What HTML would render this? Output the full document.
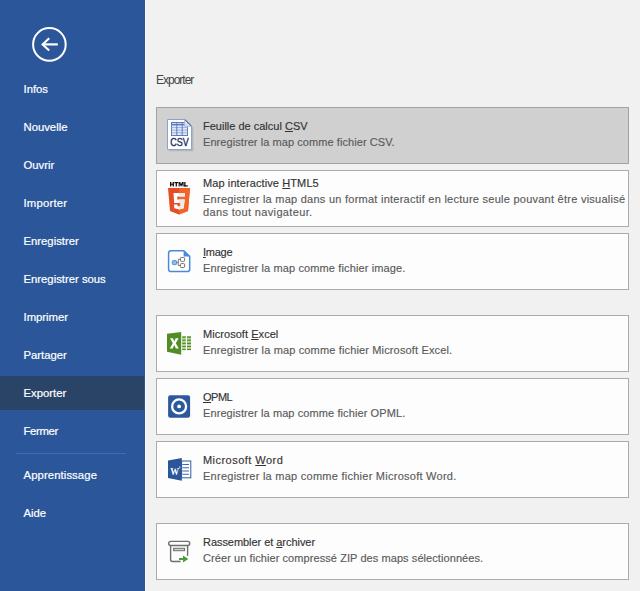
<!DOCTYPE html>
<html><head><meta charset="utf-8">
<style>
*{margin:0;padding:0;box-sizing:border-box}
html,body{width:640px;height:591px;overflow:hidden;background:#f1f1f1;font-family:"Liberation Sans",sans-serif}
#side{position:absolute;left:0;top:0;width:145px;height:591px;background:#2b579a}
#side .it{position:absolute;left:23.5px;color:#fff;font-size:11.3px;line-height:14px;white-space:nowrap;-webkit-text-stroke:0.2px #fff}
#sel{position:absolute;left:0;top:376px;width:144px;height:34px;background:#2a4468}
#sep{position:absolute;left:16px;top:453px;width:110px;height:1px;background:#3a6bc0}
#edge{position:absolute;left:145px;top:0;width:1px;height:591px;background:#fbf8f3}
.ttl{position:absolute;left:156px;top:73px;font-size:12px;letter-spacing:-1px;color:#444;line-height:14px;white-space:nowrap}
.card{position:absolute;left:156px;width:473px;height:57px;border:1px solid #ababab;background:#fdfdfd}
.card.on{background:#d0d0d0;border-color:#a2a2a2}
.t{position:absolute;left:46px;font-size:11px;line-height:13px;color:#333;white-space:nowrap;-webkit-text-stroke:0.15px #333}
.d{position:absolute;left:46px;font-size:11px;line-height:13px;color:#5a5a5a;white-space:nowrap;-webkit-text-stroke:0.15px #5a5a5a}
.ic{position:absolute;left:10px;top:10px}
u{text-decoration:underline;text-decoration-thickness:1px;text-underline-offset:1px;text-decoration-skip-ink:none}
</style></head><body>
<div id="side">
  <svg style="position:absolute;left:0;top:0" width="145" height="80">
    <circle cx="49.4" cy="44.4" r="16.3" fill="none" stroke="#fff" stroke-width="2"/>
    <path d="M42.5 44.4H57.8" stroke="#fff" stroke-width="2.2" fill="none"/>
    <path d="M49.2 38.2L42.6 44.4L49.2 50.6" stroke="#fff" stroke-width="2.1" fill="none"/>
  </svg>
  <div class="it" style="top:82px">Infos</div>
  <div class="it" style="top:120px">Nouvelle</div>
  <div class="it" style="top:158px">Ouvrir</div>
  <div class="it" style="top:196px;letter-spacing:0.2px">Importer</div>
  <div class="it" style="top:234px">Enregistrer</div>
  <div class="it" style="top:272px">Enregistrer sous</div>
  <div class="it" style="top:310px">Imprimer</div>
  <div class="it" style="top:348px">Partager</div>
  <div id="sel"></div>
  <div class="it" style="top:386px">Exporter</div>
  <div class="it" style="top:424px;letter-spacing:-0.35px">Fermer</div>
  <div id="sep"></div>
  <div class="it" style="top:468px;letter-spacing:0.1px">Apprentissage</div>
  <div class="it" style="top:506px">Aide</div>
</div>
<div id="edge"></div>
<div class="ttl">Exporter</div>

<div class="card on" style="top:107px">
  <div class="t" style="top:12px">Feuille de calcul <u>C</u>SV</div>
  <div class="d" style="top:28px;letter-spacing:0.07px">Enregistrer la map comme fichier CSV.</div>
</div>
<div class="card" style="top:170px">
  <div class="t" style="top:6px;letter-spacing:0.1px">Map interactive <u>H</u>TML5</div>
  <div class="d" style="top:22px;letter-spacing:0.253px">Enregistrer la map dans un format interactif en lecture seule pouvant être visualisé</div>
  <div class="d" style="top:35px;letter-spacing:0.35px">dans tout navigateur.</div>
</div>
<div class="card" style="top:233px">
  <div class="t" style="top:12px;letter-spacing:-0.25px"><u>I</u>mage</div>
  <div class="d" style="top:28px;letter-spacing:0.13px">Enregistrer la map comme fichier image.</div>
</div>
<div class="card" style="top:315px">
  <div class="t" style="top:12px;letter-spacing:0.05px">Microsoft <u>E</u>xcel</div>
  <div class="d" style="top:28px;letter-spacing:0.146px">Enregistrer la map comme fichier Microsoft Excel.</div>
</div>
<div class="card" style="top:378px">
  <div class="t" style="top:12px;letter-spacing:-0.5px"><u>O</u>PML</div>
  <div class="d" style="top:28px;letter-spacing:0.095px">Enregistrer la map comme fichier OPML.</div>
</div>
<div class="card" style="top:441px">
  <div class="t" style="top:12px;letter-spacing:0.46px">Microsoft <u>W</u>ord</div>
  <div class="d" style="top:28px;letter-spacing:0.255px">Enregistrer la map comme fichier Microsoft Word.</div>
</div>
<div class="card" style="top:523px">
  <div class="t" style="top:12px;letter-spacing:-0.05px">Rassembler et <u>a</u>rchiver</div>
  <div class="d" style="top:28px;letter-spacing:0.075px">Créer un fichier compressé ZIP des maps sélectionnées.</div>
</div>

<svg style="position:absolute;left:0;top:0" width="640" height="591" viewBox="0 0 640 591">
  <!-- CSV -->
  <g>
    <path d="M168.5 120.5H186L192.5 127V150.5H168.5Z" fill="#9aa0a8" opacity="0.55" transform="translate(0.8,0.8)"/>
    <path d="M167.5 119.5H185L191.5 126V149.5H167.5Z" fill="#fff" stroke="#8fa3c8" stroke-width="1"/>
    <rect x="171.5" y="122.5" width="16" height="13" fill="#e6ecf7" stroke="#5b7cc2" stroke-width="1"/>
    <path d="M171.5 125H187.5M171.5 127.6H187.5M171.5 130.2H187.5M171.5 132.8H187.5" stroke="#8ea4d6" stroke-width="0.9"/>
    <path d="M176.8 122.5V135.5M182.2 122.5V135.5" stroke="#5b7cc2" stroke-width="1"/>
    <path d="M171.5 124.5H187.5" stroke="#5b7cc2" stroke-width="1.4"/>
    <path d="M184.5 119.2V126.5H191.8Z" fill="#d5e0f2"/>
    <path d="M184.8 119.5L191.5 126.2" stroke="#34466e" stroke-width="1"/>
    <path d="M184.5 119.5V126.3H191.5" fill="none" stroke="#9fb3d6" stroke-width="0.7"/>
    <text x="179.5" y="146" text-anchor="middle" font-family="Liberation Sans" font-size="10.5" fill="#1b2a63" stroke="#1b2a63" stroke-width="0.35" textLength="18.5" lengthAdjust="spacingAndGlyphs">CSV</text>
  </g>
  <!-- HTML5 -->
  <g>
    <g fill="#111">
      <rect x="170" y="182" width="1.3" height="4.5"/><rect x="172.6" y="182" width="1.3" height="4.5"/><rect x="170" y="183.7" width="3.9" height="1.1"/>
      <rect x="174.4" y="182" width="3.8" height="1.2"/><rect x="175.65" y="182" width="1.3" height="4.5"/>
      <path d="M178.6 186.5V182H180.2L181.1 184.2L182 182H183.6V186.5H182.5V184L181.5 186.3H180.7L179.7 184V186.5Z"/>
      <rect x="184.2" y="182" width="1.3" height="4.5"/><rect x="184.2" y="185.3" width="3.6" height="1.2"/>
    </g>
    <path d="M168 188H190L188 211L179 214.5L170 211Z" fill="#e44d26"/>
    <path d="M179 188H190L188 211L179 214.5Z" fill="#f16529"/>
    <path d="M173.5 193H185V196.5H177.2L177.5 199.6H184.7L183.7 208.2L179 209.6L174.3 208.2L174 204.5H177.4L177.6 206L179 206.4L180.4 206L180.6 203H174.2Z" fill="#fff"/>
    <path d="M179 193H185V196.5H179ZM179 199.6H184.7L183.7 208.2L179 209.6V206.4L180.4 206L180.6 203H179Z" fill="#ebebeb"/>
  </g>
  <!-- Image -->
  <g>
    <path d="M171 250.8H183.8L189.7 256.4V269.2Q189.7 271.6 187.3 271.6H171Q168.6 271.6 168.6 269.2V253.2Q168.6 250.8 171 250.8Z" fill="#fff" stroke="#4a8bd9" stroke-width="1.5"/>
    <path d="M183.6 250.6L190 256.4H183.6Z" fill="#4a8bd9"/>
    <rect x="172.3" y="260.6" width="4.3" height="4" rx="1" fill="#8cbcf0" stroke="#4a8bd9" stroke-width="1"/>
    <path d="M176.6 262.6H178.3M180.3 259.3H178.3V265.5H180.3" fill="none" stroke="#707070" stroke-width="0.9"/>
    <rect x="180.4" y="257.5" width="4.2" height="3.9" rx="0.9" fill="#fff" stroke="#666" stroke-width="0.95"/>
    <rect x="180.4" y="263.6" width="4.2" height="3.9" rx="0.9" fill="#fff" stroke="#666" stroke-width="0.95"/>
  </g>
  <!-- Excel -->
  <g>
    <path d="M167 333.8L181.2 332V354.8L167 351.8Z" fill="#528c24"/>
    <path d="M170 338.2H172.9L174.3 341.4L175.7 338.2H178.6L175.8 343.2L178.8 348.4H175.9L174.3 345L172.7 348.4H169.8L172.8 343.2Z" fill="#fff"/>
    <g fill="#528c24">
      <rect x="182.2" y="336.3" width="3.6" height="1.6"/><rect x="187" y="336.3" width="4" height="1.6"/>
      <rect x="182.2" y="339.3" width="3.6" height="1.6"/><rect x="187" y="339.3" width="4" height="1.6"/>
      <rect x="182.2" y="342.4" width="3.6" height="1.6"/><rect x="187" y="342.4" width="4" height="1.6"/>
      <rect x="182.2" y="345.5" width="3.6" height="1.6"/><rect x="187" y="345.5" width="4" height="1.6"/>
      <rect x="182.2" y="348.5" width="3.6" height="1.6"/><rect x="187" y="348.5" width="4" height="1.6"/>
    </g>
    <g fill="#b6d09e">
      <rect x="182.2" y="337.9" width="3.6" height="1.4"/><rect x="187" y="337.9" width="4" height="1.4"/>
      <rect x="182.2" y="340.9" width="3.6" height="1.5"/><rect x="187" y="340.9" width="4" height="1.5"/>
      <rect x="182.2" y="344" width="3.6" height="1.5"/><rect x="187" y="344" width="4" height="1.5"/>
      <rect x="182.2" y="347.1" width="3.6" height="1.4"/><rect x="187" y="347.1" width="4" height="1.4"/>
    </g>
  </g>
  <!-- OPML -->
  <g>
    <rect x="168.1" y="395.2" width="22" height="22.6" rx="2.2" fill="#2c599e"/>
    <circle cx="179.1" cy="406.4" r="7" fill="none" stroke="#fff" stroke-width="2.3"/>
    <circle cx="179.1" cy="406.4" r="1.9" fill="#fff"/>
  </g>
  <!-- Word -->
  <g>
    <rect x="181.6" y="461" width="9.2" height="16.8" fill="#fff" stroke="#2f5ca6" stroke-width="1"/>
    <path d="M182.3 464.5H189M182.3 467.7H189M182.3 471H189M182.3 474.2H189" stroke="#3f6ab0" stroke-width="1.1"/>
    <path d="M168 460.4L181.8 458V480.8L168 478Z" fill="#2b579a"/>
    <text x="174.6" y="474.8" text-anchor="middle" font-family="Liberation Serif" font-size="10.5" font-weight="bold" fill="#fff" textLength="8.8" lengthAdjust="spacingAndGlyphs">W</text><rect x="179.4" y="466.4" width="0.8" height="2" fill="#fff"/>
  </g>
  <!-- Archive -->
  <g fill="none" stroke="#6e6e6e" stroke-width="1.4">
    <rect x="168.7" y="541.4" width="21" height="4.1" rx="2"/>
    <path d="M170.6 545.5V559.6Q170.6 561.5 172.5 561.5H180.6"/>
    <path d="M187.6 545.5V555.8"/>
    <rect x="173.6" y="548.3" width="11" height="2.4" fill="#cfcfcf" stroke-width="1"/>
  </g>
  <path d="M179 558H183V555.6L188.3 559L183 562.4V560H179Z" fill="#4c9a3c"/>
</svg>
</body></html>
